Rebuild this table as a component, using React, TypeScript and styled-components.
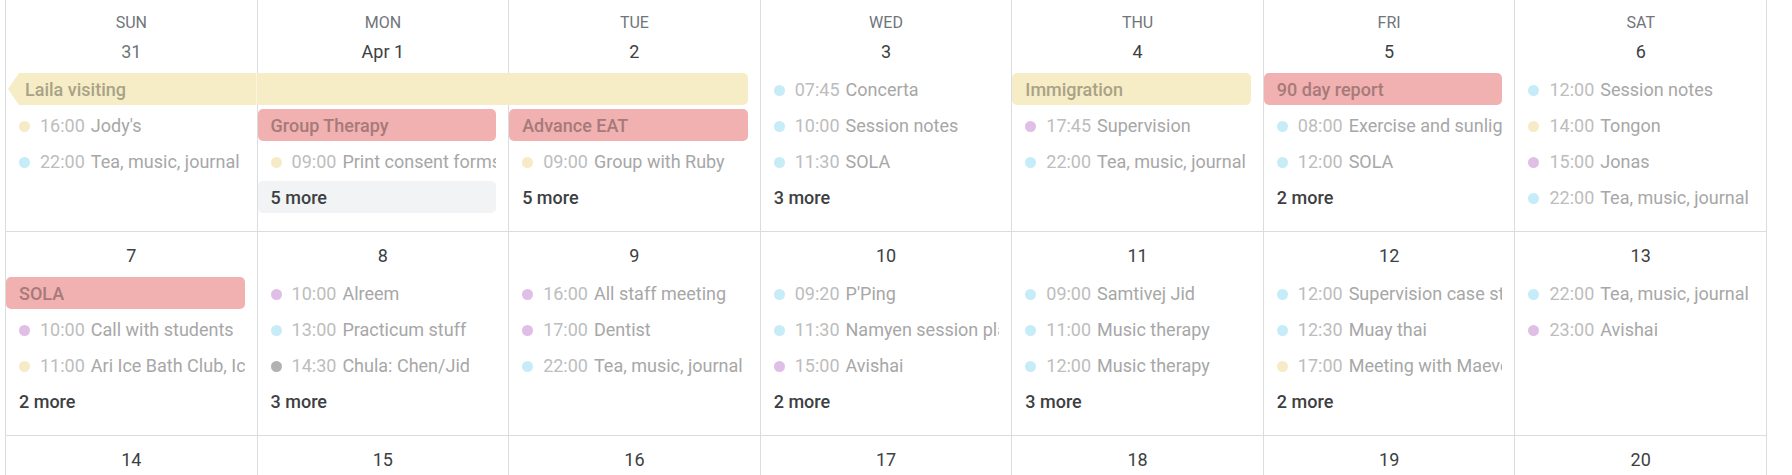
import React from "react";
import styled, { createGlobalStyle, css } from "styled-components";

type Tone = "yellow" | "red" | "blue" | "purple" | "gray";

const dotColors: Record<Tone, string> = {
  yellow: "#f6ebc6",
  red: "#f1b0b0",
  blue: "#c6ecf8",
  purple: "#e0bfe6",
  gray: "#b2b2b2",
};

const barBg: Record<string, string> = {
  yellow: "#f6edc7",
  red: "#f1b1b0",
};

const barText: Record<string, string> = {
  yellow: "#a9a286",
  red: "#a67a7a",
};

const GlobalStyle = createGlobalStyle`
  html, body {
    margin: 0;
    padding: 0;
    background: #ffffff;
    overflow: hidden;
  }
  body {
    font-family: Roboto, "Liberation Sans", Arial, sans-serif;
  }
`;

const Page = styled.div`
  padding-left: 5px;
`;

const Calendar = styled.div`
  display: grid;
  grid-template-columns: repeat(7, minmax(0, 1fr));
  width: 1762px;
  box-sizing: border-box;
  border-right: 1px solid #dadce0;
`;

const DayCell = styled.div`
  display: flex;
  flex-direction: column;
  min-width: 0;
  border-left: 1px solid #dadce0;
  border-bottom: 1px solid #dadce0;
  padding-bottom: 16px;
`;

const WeekdayLabel = styled.div`
  box-sizing: border-box;
  height: 28px;
  padding-top: 15px;
  line-height: 16px;
  font-size: 16px;
  text-align: center;
  text-transform: uppercase;
  color: #70757a;
`;

const DayNumber = styled.div<{ $muted?: boolean }>`
  box-sizing: border-box;
  height: 43px;
  padding-top: 12px;
  line-height: 24px;
  font-size: 18px;
  text-align: center;
  color: ${(p) => (p.$muted ? "#70757a" : "#3c4043")};
`;

const Items = styled.div`
  display: flex;
  flex-direction: column;
  height: 144px;
`;

const slot = css`
  box-sizing: border-box;
  height: 32px;
  margin: 2px 12px 2px 0;
  padding-top: 2px;
  line-height: 30px;
  font-size: 18px;
  white-space: nowrap;
  overflow: hidden;
`;

const Bar = styled.div<{
  $tone: "yellow" | "red";
  $joinLeft?: boolean;
  $joinRight?: boolean;
  $arrow?: boolean;
  $faint?: boolean;
  $wide?: boolean;
}>`
  ${slot};
  padding-left: ${(p) => (p.$wide ? "19px" : "13px")};
  font-weight: 500;
  background: ${(p) => barBg[p.$tone]};
  color: ${(p) => (p.$faint ? "rgba(60, 64, 67, 0.022)" : barText[p.$tone])};
  border-radius: 5px;
  ${(p) =>
    p.$joinLeft &&
    css`
      margin-left: -1px;
      border-top-left-radius: 0;
      border-bottom-left-radius: 0;
    `}
  ${(p) =>
    p.$joinRight &&
    css`
      margin-right: 0;
      border-top-right-radius: 0;
      border-bottom-right-radius: 0;
    `}
  ${(p) =>
    p.$arrow &&
    css`
      border-top-left-radius: 0;
      border-bottom-left-radius: 0;
      clip-path: polygon(2px 50%, 13px 0, 100% 0, 100% 100%, 13px 100%);
    `}
`;

const EventRow = styled.div`
  ${slot};
  display: flex;
  align-items: center;
  padding-left: 13px;
`;

const Dot = styled.span<{ $tone: Tone }>`
  flex: none;
  width: 11px;
  height: 11px;
  border-radius: 50%;
  margin-right: 10px;
  background: ${(p) => dotColors[p.$tone]};
`;

const Time = styled.span`
  flex: none;
  color: #bdbdbd;
  margin-right: 6px;
`;

const Title = styled.span`
  color: #a7a7a7;
`;

const More = styled.div<{ $active?: boolean }>`
  ${slot};
  padding-left: 13px;
  font-weight: 500;
  color: #3c4043;
  border-radius: 5px;
  background: ${(p) => (p.$active ? "#f1f3f4" : "transparent")};
`;

type Item =
  | {
      kind: "bar";
      tone: "yellow" | "red";
      title: string;
      joinLeft?: boolean;
      joinRight?: boolean;
      arrow?: boolean;
      faint?: boolean;
      wide?: boolean;
    }
  | { kind: "event"; tone: Tone; time: string; title: string }
  | { kind: "more"; count: number; active?: boolean };

type Day = { weekday?: string; label: string; muted?: boolean; items: Item[] };

const ev = (tone: Tone, time: string, title: string): Item => ({ kind: "event", tone, time, title });
const more = (count: number, active?: boolean): Item => ({ kind: "more", count, active });

const days: Day[] = [
  {
    weekday: "Sun",
    label: "31",
    muted: true,
    items: [
      { kind: "bar", tone: "yellow", title: "Laila visiting", arrow: true, joinRight: true, wide: true },
      ev("yellow", "16:00", "Jody's"),
      ev("blue", "22:00", "Tea, music, journal"),
    ],
  },
  {
    weekday: "Mon",
    label: "Apr 1",
    items: [
      { kind: "bar", tone: "yellow", title: "Laila visiting", joinLeft: true, joinRight: true, faint: true, wide: true },
      { kind: "bar", tone: "red", title: "Group Therapy" },
      ev("yellow", "09:00", "Print consent forms"),
      more(5, true),
    ],
  },
  {
    weekday: "Tue",
    label: "2",
    items: [
      { kind: "bar", tone: "yellow", title: "Laila visiting", joinLeft: true, faint: true, wide: true },
      { kind: "bar", tone: "red", title: "Advance EAT" },
      ev("yellow", "09:00", "Group with Ruby"),
      more(5),
    ],
  },
  {
    weekday: "Wed",
    label: "3",
    items: [ev("blue", "07:45", "Concerta"), ev("blue", "10:00", "Session notes"), ev("blue", "11:30", "SOLA"), more(3)],
  },
  {
    weekday: "Thu",
    label: "4",
    items: [
      { kind: "bar", tone: "yellow", title: "Immigration" },
      ev("purple", "17:45", "Supervision"),
      ev("blue", "22:00", "Tea, music, journal"),
    ],
  },
  {
    weekday: "Fri",
    label: "5",
    items: [
      { kind: "bar", tone: "red", title: "90 day report" },
      ev("blue", "08:00", "Exercise and sunlight"),
      ev("blue", "12:00", "SOLA"),
      more(2),
    ],
  },
  {
    weekday: "Sat",
    label: "6",
    items: [
      ev("blue", "12:00", "Session notes"),
      ev("yellow", "14:00", "Tongon"),
      ev("purple", "15:00", "Jonas"),
      ev("blue", "22:00", "Tea, music, journal"),
    ],
  },
  {
    label: "7",
    items: [
      { kind: "bar", tone: "red", title: "SOLA" },
      ev("purple", "10:00", "Call with students"),
      ev("yellow", "11:00", "Ari Ice Bath Club, Ice bath"),
      more(2),
    ],
  },
  {
    label: "8",
    items: [ev("purple", "10:00", "Alreem"), ev("blue", "13:00", "Practicum stuff"), ev("gray", "14:30", "Chula: Chen/Jid"), more(3)],
  },
  {
    label: "9",
    items: [ev("purple", "16:00", "All staff meeting"), ev("purple", "17:00", "Dentist"), ev("blue", "22:00", "Tea, music, journal")],
  },
  {
    label: "10",
    items: [ev("blue", "09:20", "P'Ping"), ev("blue", "11:30", "Namyen session plan"), ev("purple", "15:00", "Avishai"), more(2)],
  },
  {
    label: "11",
    items: [ev("blue", "09:00", "Samtivej Jid"), ev("blue", "11:00", "Music therapy"), ev("blue", "12:00", "Music therapy"), more(3)],
  },
  {
    label: "12",
    items: [
      ev("blue", "12:00", "Supervision case study"),
      ev("blue", "12:30", "Muay thai"),
      ev("yellow", "17:00", "Meeting with Maeve"),
      more(2),
    ],
  },
  {
    label: "13",
    items: [ev("blue", "22:00", "Tea, music, journal"), ev("purple", "23:00", "Avishai")],
  },
  { label: "14", items: [] },
  { label: "15", items: [] },
  { label: "16", items: [] },
  { label: "17", items: [] },
  { label: "18", items: [] },
  { label: "19", items: [] },
  { label: "20", items: [] },
];

const renderItem = (item: Item, i: number) => {
  if (item.kind === "bar") {
    return (
      <Bar
        key={i}
        $tone={item.tone}
        $joinLeft={item.joinLeft}
        $joinRight={item.joinRight}
        $arrow={item.arrow}
        $faint={item.faint}
        $wide={item.wide}
      >
        {item.title}
      </Bar>
    );
  }
  if (item.kind === "event") {
    return (
      <EventRow key={i}>
        <Dot $tone={item.tone} />
        <Time>{item.time}</Time>
        <Title>{item.title}</Title>
      </EventRow>
    );
  }
  return (
    <More key={i} $active={item.active}>
      {item.count} more
    </More>
  );
};

export default function App() {
  return (
    <>
      <GlobalStyle />
      <Page>
        <Calendar>
          {days.map((d, idx) => (
            <DayCell key={idx}>
              {d.weekday && <WeekdayLabel>{d.weekday}</WeekdayLabel>}
              <DayNumber $muted={d.muted}>{d.label}</DayNumber>
              <Items>{d.items.map(renderItem)}</Items>
            </DayCell>
          ))}
        </Calendar>
      </Page>
    </>
  );
}
